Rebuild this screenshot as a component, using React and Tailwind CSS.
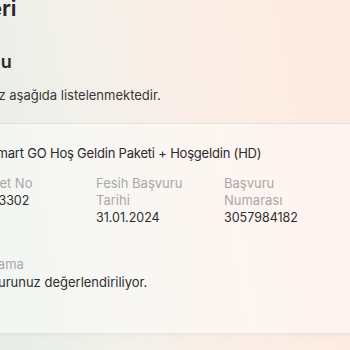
import React from "react";

const rows = [
  { label: "Hizmet No", value: "78433302" },
  { label: "Fesih Başvuru Tarihi", value: "31.01.2024" },
  { label: "Başvuru Numarası", value: "3057984182" },
];

const App = () => {
  return (
    <div className="min-h-screen w-full overflow-hidden bg-[linear-gradient(80deg,#e7ede8_0%,#f2f0ea_30%,#fbede5_65%,#fdeae0_100%)] font-['Inter','Liberation_Sans',sans-serif]">
      <div className="w-[460px]">
        <h1 className="-mt-[6px] -ml-[137px] text-[22px] leading-[28px] font-semibold text-[#262626]">
          Fesih Talepleri
        </h1>
        <h2 className="mt-[28px] -ml-[134px] text-[18px] leading-[24px] font-semibold text-[#2a2a2a]">
          Başvuru Durumu
        </h2>
        <p className="mt-[11px] -ml-[117px] text-[13px] leading-[20px] text-[#383838]">
          Fesih başvurularınız aşağıda listelenmektedir.
        </p>

        <div className="mt-[18px] -ml-[56px] border-t border-[#e6e2dc] bg-white/45 pl-[24px] pt-[19px] pb-[42px] shadow-[0_2px_4px_rgba(0,0,0,0.05)]">
          <h3 className="text-[13px] leading-[20px] tracking-[-0.2px] text-[#2b2b2b]">
            TV Smart GO Hoş Geldin Paketi + Hoşgeldin (HD)
          </h3>
          <div className="mt-[12px] grid grid-cols-[96px_96px_96px] gap-x-8">
            {rows.map((r) => (
              <div key={r.label} className="text-[13px] leading-[17px]">
                <div className="text-[#a8a8a8]">{r.label}</div>
                <div className="text-[12.5px] text-[#2e2e2e]">{r.value}</div>
              </div>
            ))}
          </div>
          <div className="mt-[30px] text-[13px] leading-[17px]">
            <div className="text-[#a8a8a8]">Açıklama</div>
            <div className="mt-[1px] text-[#2e2e2e]">Başvurunuz değerlendiriliyor.</div>
          </div>
        </div>
      </div>
    </div>
  );
};

export default App;
